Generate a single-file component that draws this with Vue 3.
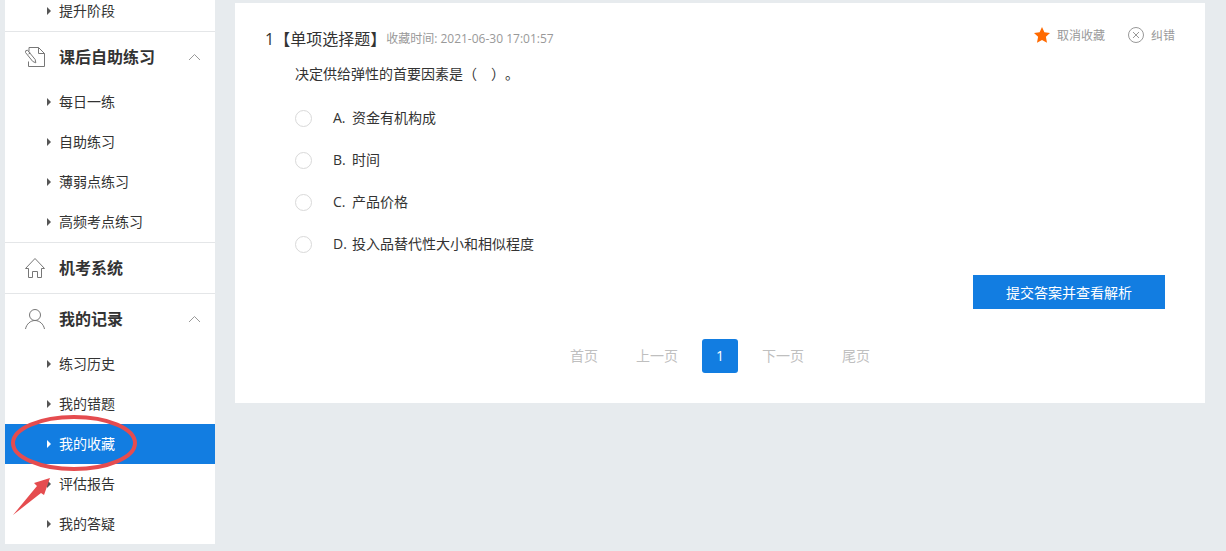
<script setup>
import { ref } from 'vue'

const sections = [
  { items: ['提升阶段'] },
  { title: '课后自助练习', icon: 'note', open: true, items: ['每日一练', '自助练习', '薄弱点练习', '高频考点练习'] },
  { title: '机考系统', icon: 'home', items: [] },
  { title: '我的记录', icon: 'user', open: true, items: ['练习历史', '我的错题', '我的收藏', '评估报告', '我的答疑'] },
]
const active = '我的收藏'

const options = [
  { key: 'A', text: '资金有机构成' },
  { key: 'B', text: '时间' },
  { key: 'C', text: '产品价格' },
  { key: 'D', text: '投入品替代性大小和相似程度' },
]
const answer = ref('')

const pages = ['首页', '上一页', '1', '下一页', '尾页']
</script>

<template>
  <div class="page">
    <nav class="sidebar">
      <section v-for="(s, i) in sections" :key="i" class="group">
        <button v-if="s.title" type="button" class="group-title">
          <svg v-if="s.icon === 'note'" class="icon" viewBox="0 0 22 22">
            <path d="M5 5.500V1.500H14.500L20.500 7.500V20.500H4.500V15.500M14.500 1.500V7.500H20.500" />
            <path d="M1.500 6.500Q1 4 3.500 4.200L11.200 13.500L11.800 16.800L8.800 15.500Z" />
            <path d="M4.500 8L6.300 7" />
          </svg>
          <svg v-else-if="s.icon === 'home'" class="icon" viewBox="0 0 22 22">
            <path d="M11 1.500L1.500 11.500H4.500V20.500H8.500V14.500H13.500V20.500H17.500V11.500H20.500Z" />
          </svg>
          <svg v-else class="icon" viewBox="0 0 22 22">
            <circle cx="11" cy="7" r="5.500" />
            <path d="M1.500 21C2.500 16 6.500 12.500 11 12.500S19.500 16 20.500 21" />
          </svg>
          <span class="name">{{ s.title }}</span>
          <svg v-if="s.open" class="chevron" viewBox="0 0 13 8">
            <path d="M1 7L6.500 1.500L12 7" />
          </svg>
        </button>
        <ul v-if="s.items.length" class="list">
          <li v-for="item in s.items" :key="item">
            <a href="#" class="link" :class="{ active: item === active }"><span>{{ item }}</span></a>
          </li>
        </ul>
      </section>
      <svg class="mark" viewBox="0 0 130 104">
        <ellipse cx="65" cy="29" rx="61" ry="26" />
        <path d="M41 64L25 69L28 72L4 101L32 79L35 81Z" />
      </svg>
    </nav>

    <main class="card">
      <header class="head">
        <h1 class="kind">1【单项选择题】</h1>
        <span class="time">收藏时间: 2021-06-30 17:01:57</span>
        <div class="actions">
          <button type="button" class="action">
            <svg class="small-icon star" viewBox="0 0 18 18">
              <path d="M9 1L11.400 6.200L17 6.900L12.900 10.800L14 16.700L9 13.900L4 16.700L5.100 10.800L1 6.900L6.600 6.200Z" />
            </svg>
            取消收藏
          </button>
          <button type="button" class="action">
            <svg class="small-icon wrong" viewBox="0 0 18 18">
              <circle cx="9" cy="9" r="7.500" />
              <path d="M6 6L12 12M12 6L6 12" />
            </svg>
            纠错
          </button>
        </div>
      </header>

      <form class="body" @submit.prevent>
        <p class="question">决定供给弹性的首要因素是（　）。</p>
        <div class="options">
          <label v-for="o in options" :key="o.key" class="option">
            <input v-model="answer" type="radio" name="answer" :value="o.key" />
            <span class="key">{{ o.key }}.</span>
            <span>{{ o.text }}</span>
          </label>
        </div>
        <button type="submit" class="submit">提交答案并查看解析</button>
      </form>

      <nav class="pager">
        <a v-for="p in pages" :key="p" href="#" :class="{ current: p === '1' }">{{ p }}</a>
      </nav>
    </main>
  </div>
</template>

<style>
body {
  background: #e7ebee;
}
</style>

<style scoped>
.page {
  display: flex;
  align-items: flex-start;
  padding: 0 21px 0 5px;
  overflow: hidden;
  font-family: "Open Sans", "Noto Sans CJK SC", sans-serif;
  font-size: 14px;
  color: #333;
  text-spacing-trim: space-all;
}

button {
  border: 0;
  padding: 0;
  background: none;
  font: inherit;
  color: inherit;
  cursor: pointer;
}

a {
  color: inherit;
  text-decoration: none;
}

.sidebar {
  position: relative;
  flex: 0 0 210px;
  margin-top: -9px;
  background: #fff;
}

.group + .group {
  border-top: 1px solid #e4e6e8;
}

.group-title {
  display: flex;
  align-items: center;
  width: 100%;
  height: 50px;
  padding: 0 14px 0 19px;
  font-size: 16px;
  font-weight: 700;
  text-align: left;
}

.icon {
  width: 22px;
  height: 22px;
  margin-right: 13px;
  fill: none;
  stroke: #777;
}

.name {
  flex: 1;
}

.name,
.link span,
.option span {
  padding-bottom: 2px;
}

.chevron {
  width: 13px;
  height: 8px;
  fill: none;
  stroke: #999;
}

.list {
  margin: 0;
  padding: 0;
  list-style: none;
}

.link {
  display: flex;
  align-items: center;
  height: 40px;
  padding-left: 42px;
}

.link::before {
  content: "";
  margin-right: 8px;
  border: 4px solid transparent;
  border-right: 0;
  border-left-color: #555;
}

.link.active {
  background: #127de1;
  color: #fff;
}

.link.active::before {
  border-left-color: #fff;
}

.mark {
  position: absolute;
  left: 4px;
  bottom: 26px;
  width: 130px;
  height: 104px;
  pointer-events: none;
}

.mark ellipse {
  fill: none;
  stroke: #e54c4f;
  stroke-width: 4;
}

.mark path {
  fill: #e54c4f;
}

.card {
  flex: 1;
  min-width: 0;
  margin: 3px 0 0 20px;
  padding: 15px 30px 30px;
  background: #fff;
}

.head {
  display: flex;
  align-items: center;
  height: 40px;
  color: #999;
  font-size: 12px;
}

.kind {
  margin: 0;
  font-size: 16px;
  font-weight: 400;
  color: #333;
}

.actions {
  display: flex;
  gap: 22px;
  margin: 0 0 6px auto;
}

.action {
  display: flex;
  align-items: center;
  gap: 6px;
}

.small-icon {
  width: 18px;
  height: 18px;
}

.star {
  fill: #ff6a00;
}

.wrong {
  fill: none;
  stroke: #999;
}

.body {
  display: flex;
  flex-direction: column;
  padding: 0 10px 0 30px;
}

.question {
  margin: 0;
  line-height: 32px;
}

.options {
  margin: 7px 0 10px;
}

.option {
  display: flex;
  align-items: center;
  height: 42px;
}

.option input {
  appearance: none;
  width: 17px;
  height: 17px;
  margin: 0 21px 0 0;
  border: 1px solid #d9d9d9;
  border-radius: 50%;
}

.option input:checked {
  border: 5px solid #127de1;
}

.key {
  width: 19px;
}

.submit {
  align-self: flex-end;
  width: 192px;
  height: 34px;
  background: #127de1;
  color: #fff;
}

.pager {
  display: flex;
  justify-content: center;
  gap: 10px;
  margin-top: 30px;
  line-height: 34px;
  color: #bfbfbf;
}

.pager a {
  padding: 0 14px;
}

.pager .current {
  border-radius: 3px;
  background: #127de1;
  color: #fff;
}
</style>
